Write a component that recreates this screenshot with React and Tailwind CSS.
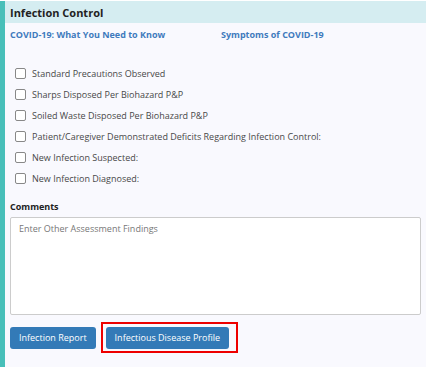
export default function App() {
  const items = [
    "Standard Precautions Observed",
    "Sharps Disposed Per Biohazard P&P",
    "Soiled Waste Disposed Per Biohazard P&P",
    "Patient/Caregiver Demonstrated Deficits Regarding Infection Control:",
    "New Infection Suspected:",
    "New Infection Diagnosed:",
  ]

  return (
    <div className="w-[426px] h-[369px] bg-white pt-px font-['Open_Sans',sans-serif]">
      <div className="flex h-[366px] border-l-[5px] border-[#48bfb9] bg-[#f9f9fe]">
        <div className="flex-1 flex flex-col">
          <div className="h-[22px] bg-[#d5edf1] flex items-center pl-[5px]">
            <h2 className="text-[11px] font-bold text-[#222] translate-y-px">Infection Control</h2>
          </div>

          <div className="flex pl-[5px] mt-[6px] text-[9px] leading-[12px] font-bold text-[#3f7bbd]">
            <a className="w-[211px]">COVID-19: What You Need to Know</a>
            <a>Symptoms of COVID-19</a>
          </div>

          <div className="flex flex-col gap-[10px] pl-[10px] mt-[27px]">
            {items.map((t) => (
              <label key={t} className="flex items-center gap-[6px] h-[11px] text-[9px] text-[#484848]">
                <span className="w-[11px] h-[11px] rounded-[2px] border border-[#888] bg-white" />
                {t}
              </label>
            ))}
          </div>

          <div className="pl-[5px] mt-[17px] text-[9px] leading-[12px] font-bold text-[#222]">Comments</div>
          <div className="ml-[5px] mr-[5px] mt-[4px] h-[98px] rounded-[2px] border border-[#ccc] bg-white px-[8px] py-[5px] text-[9px] leading-[12px] text-[#777]">
            Enter Other Assessment Findings
          </div>

          <div className="flex items-start pl-[5px] mt-[7px] gap-[5px]">
            <button className="mt-[5px] h-[22px] px-[9px] rounded-[3px] bg-[#337ab7] text-white text-[9px]">
              Infection Report
            </button>
            <div className="border-2 border-[#e00] pl-[3px] pr-[7px] pt-[3px] pb-[2px]">
              <button className="h-[22px] px-[9px] rounded-[3px] bg-[#337ab7] text-white text-[9px] block">
                Infectious Disease Profile
              </button>
            </div>
          </div>
        </div>
      </div>
    </div>
  )
}
